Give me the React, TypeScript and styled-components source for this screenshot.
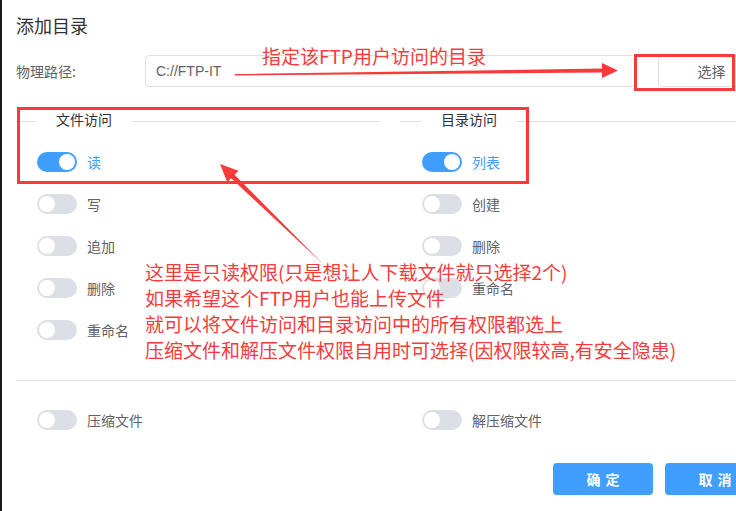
import styled, { createGlobalStyle } from 'styled-components'

const GlobalStyle = createGlobalStyle`
  html, body {
    margin: 0;
    padding: 0;
    background: #fff;
    overflow: hidden;
  }
  body {
    font-family: "Liberation Sans", "Noto Sans CJK SC", sans-serif;
  }
`

const Page = styled.div`
  position: relative;
  width: 736px;
  height: 511px;
  overflow: hidden;
  background: #fff;
  box-shadow: inset 2px 0 0 #1b1b1b;
`

const Dialog = styled.div`
  width: 749px;
  padding: 0 16px;
`

const Title = styled.h2`
  margin: 0;
  padding-top: 15px;
  font-size: 18px;
  line-height: 20px;
  font-weight: normal;
  color: #303133;
  font-family: "Noto Sans CJK SC", sans-serif;
`

const FormRow = styled.div`
  display: flex;
  align-items: center;
  height: 32px;
  margin-top: 20px;
`

const FormLabel = styled.label`
  width: 129px;
  font-size: 14px;
  color: #606266;
  font-family: "Noto Sans CJK SC", sans-serif;
`

const PathInput = styled.div`
  box-sizing: border-box;
  width: 491px;
  height: 32px;
  line-height: 30px;
  padding: 0 10px;
  border: 1px solid #dcdfe6;
  border-radius: 4px;
  font-size: 14px;
  color: #606266;
`

const PickButton = styled.div`
  box-sizing: border-box;
  width: 107px;
  height: 32px;
  margin-left: 22px;
  line-height: 30px;
  border: 1px solid #dcdfe6;
  border-radius: 4px;
  text-align: center;
  font-size: 14px;
  color: #606266;
  font-family: "Noto Sans CJK SC", sans-serif;
`

const Columns = styled.div`
  display: grid;
  grid-template-columns: 364px 364px;
  column-gap: 21px;
`

const Divider = styled.div<{ $top: number; $bottom: number }>`
  position: relative;
  height: 1px;
  background: #dcdfe6;
  margin: ${p => p.$top}px 0 ${p => p.$bottom}px;
`

const DividerText = styled.span`
  position: absolute;
  left: 20px;
  top: -12px;
  padding: 0 20px;
  background: #fff;
  font-size: 14px;
  line-height: 20px;
  color: #303133;
  font-family: "Noto Sans CJK SC", sans-serif;
`

const ToggleList = styled.div`
  display: flex;
  flex-direction: column;
  gap: 22px;
  padding-left: 21px;
`

const ToggleRow = styled.div`
  display: flex;
  align-items: center;
  gap: 10px;
  height: 20px;
`

const Switch = styled.span<{ $on?: boolean }>`
  position: relative;
  width: 40px;
  height: 20px;
  border-radius: 10px;
  background: ${p => (p.$on ? '#409eff' : '#dcdfe6')};
  &::after {
    content: '';
    position: absolute;
    top: 2px;
    left: ${p => (p.$on ? '22px' : '2px')};
    width: 16px;
    height: 16px;
    border-radius: 50%;
    background: #fff;
  }
`

const ToggleLabel = styled.span<{ $on?: boolean }>`
  font-size: 14px;
  line-height: 20px;
  color: ${p => (p.$on ? '#409eff' : '#606266')};
  font-family: "Noto Sans CJK SC", sans-serif;
`

const Footer = styled.div`
  display: flex;
  justify-content: flex-end;
  gap: 12px;
  margin-top: 33px;
`

const PrimaryButton = styled.button`
  width: 100px;
  height: 32px;
  border: none;
  border-radius: 4px;
  background: #409eff;
  color: #fff;
  font-size: 14px;
  font-weight: bold;
  letter-spacing: 5px;
  padding: 0 0 0 5px;
  font-family: "Noto Sans CJK SC", sans-serif;
`

const Marks = styled.svg`
  position: absolute;
  top: 0;
  left: 0;
  pointer-events: none;
`

const Note = styled.div<{ $x: number; $y: number; $lh: number }>`
  position: absolute;
  left: ${p => p.$x}px;
  top: ${p => p.$y}px;
  font-size: 19px;
  line-height: ${p => p.$lh}px;
  color: #f43c3c;
  white-space: nowrap;
  font-family: "Noto Sans CJK SC", sans-serif;
`

type Perm = { label: string; on?: boolean }

const fileAccess: Perm[] = [
  { label: '读', on: true },
  { label: '写' },
  { label: '追加' },
  { label: '删除' },
  { label: '重命名' },
]

const dirAccess: Perm[] = [
  { label: '列表', on: true },
  { label: '创建' },
  { label: '删除' },
  { label: '重命名' },
]

function Toggles({ items }: { items: Perm[] }) {
  return (
    <ToggleList>
      {items.map(item => (
        <ToggleRow key={item.label}>
          <Switch $on={item.on} />
          <ToggleLabel $on={item.on}>{item.label}</ToggleLabel>
        </ToggleRow>
      ))}
    </ToggleList>
  )
}

function Section({ title, items }: { title: string; items: Perm[] }) {
  return (
    <div>
      <Divider $top={34} $bottom={30}>
        <DividerText>{title}</DividerText>
      </Divider>
      <Toggles items={items} />
    </div>
  )
}

export default function App() {
  return (
    <Page>
      <GlobalStyle />
      <Dialog>
        <Title>添加目录</Title>
        <FormRow>
          <FormLabel>物理路径:</FormLabel>
          <PathInput>C://FTP-IT</PathInput>
          <PickButton>选择</PickButton>
        </FormRow>
        <Columns>
          <Section title="文件访问" items={fileAccess} />
          <Section title="目录访问" items={dirAccess} />
        </Columns>
        <Divider $top={40} $bottom={29} />
        <Columns>
          <Toggles items={[{ label: '压缩文件' }]} />
          <Toggles items={[{ label: '解压缩文件' }]} />
        </Columns>
        <Footer>
          <PrimaryButton>确定</PrimaryButton>
          <PrimaryButton>取消</PrimaryButton>
        </Footer>
      </Dialog>

      <Marks width="736" height="511" viewBox="0 0 736 511">
        <rect x="18.5" y="108.5" width="509" height="74" fill="none" stroke="#f83a3a" strokeWidth="3" />
        <rect x="635.5" y="55.5" width="98" height="34" fill="none" stroke="#f83a3a" strokeWidth="3" />
        <polygon
          points="235,74 602,68.5 602,63 618,70.5 602,78 602,72.5 235,75.5"
          fill="#f83a3a"
        />
        <polygon
          points="323,264 231.2,178.3 227.3,182.2 220,164 238.5,170.8 234.6,174.7"
          fill="#f83a3a"
        />
      </Marks>
      <Note $x={262} $y={44} $lh={24}>指定该FTP用户访问的目录</Note>
      <Note $x={145} $y={259} $lh={26}>
        这里是只读权限(只是想让人下载文件就只选择2个)
        <br />
        如果希望这个FTP用户也能上传文件
        <br />
        就可以将文件访问和目录访问中的所有权限都选上
        <br />
        压缩文件和解压文件权限自用时可选择(因权限较高,有安全隐患)
      </Note>
    </Page>
  )
}
